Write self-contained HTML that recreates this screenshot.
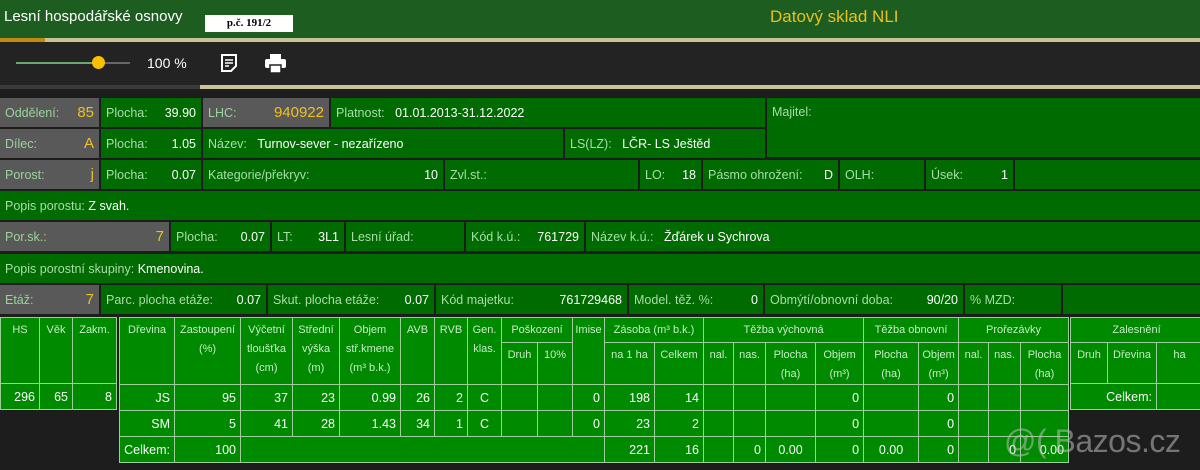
<!DOCTYPE html>
<html><head><meta charset="utf-8"><style>
*{margin:0;padding:0;box-sizing:border-box}
body{width:1200px;height:470px;background:#1d1d1d;font-family:"Liberation Sans",sans-serif;position:relative;overflow:hidden}
.a{position:absolute}
.c{position:absolute;background:#006b00;color:#a9dca9;font-size:12.5px;padding:0 5px;display:flex;align-items:center;white-space:nowrap;overflow:hidden}
.g{background:#595959;color:#9bd39b}
.c b{font-weight:normal;color:#fff}
.c .y{color:#f0c020;font-size:15px}
.r{margin-left:auto}
table{position:absolute;border-collapse:collapse;table-layout:fixed;background:#008a00;color:#fff;font-size:12.5px}
td{border:1px solid #9ccf9c;padding:0 4px;text-align:right;height:26px;vertical-align:middle;white-space:nowrap;overflow:hidden}
td.h{color:#c8eac8;text-align:center;vertical-align:top;padding:3px 1px 0;line-height:19px;font-size:11px;height:25px}
td.s{height:41px}
td.hh{height:66px}
</style></head><body>
<div class="a" style="left:0;top:0;width:1200px;height:38px;background:#1d5e20"></div>
<div class="a" style="left:4px;top:8px;color:#fff;font-size:15px">Lesní hospodářské osnovy</div>
<div class="a" style="left:205px;top:15px;width:88px;height:17px;background:#fff;color:#000;font:bold 11px 'Liberation Serif',serif;text-align:center;line-height:17px">p.č. 191/2</div>
<div class="a" style="left:770px;top:7px;color:#e8c020;font-size:17px">Datový sklad NLI</div>
<div class="a" style="left:0;top:38px;width:1200px;height:4px;background:#c9c39a"></div>
<div class="a" style="left:0;top:38px;width:45px;height:4px;background:#c08a10"></div>
<div class="a" style="left:0;top:42px;width:1200px;height:43px;background:#232323"></div>
<div class="a" style="left:16px;top:62px;width:82px;height:2px;background:#6aa86a"></div>
<div class="a" style="left:98px;top:62px;width:32px;height:2px;background:#666"></div>
<div class="a" style="left:92px;top:56px;width:13px;height:13px;border-radius:50%;background:#f7c000"></div>
<div class="a" style="left:147px;top:55px;color:#fff;font-size:14px">100 %</div>
<svg class="a" style="left:219px;top:53px" width="20" height="20" viewBox="0 0 20 20"><path d="M3 2h14v11l-5 5H3z" fill="none" stroke="#fff" stroke-width="2"/><path d="M6 7h8M6 10h8M6 13h4" stroke="#fff" stroke-width="1.6"/></svg>
<svg class="a" style="left:265px;top:54px" width="21" height="19" viewBox="0 0 21 19"><rect x="5" y="0" width="11" height="5" fill="#fff"/><rect x="0" y="5" width="21" height="9" rx="2" fill="#fff"/><rect x="5" y="11" width="11" height="8" fill="#fff" stroke="#232323" stroke-width="1.5"/></svg>
<div class="a" style="left:0;top:85px;width:1200px;height:4px;background:#c9c39a"></div>
<div class="a" style="left:0;top:85px;width:200px;height:4px;background:#3a3a3a"></div>

<div class="c g" style="left:0;top:98px;width:99px;height:29px">Oddělení:<span class="y r">85</span></div>
<div class="c" style="left:101px;top:98px;width:100px;height:29px">Plocha:<b class="r">39.90</b></div>
<div class="c g" style="left:203px;top:98px;width:126px;height:29px">LHC:<span class="y r">940922</span></div>
<div class="c" style="left:331px;top:98px;width:434px;height:29px">Platnost:&nbsp;&nbsp;&nbsp;<b>01.01.2013-31.12.2022</b></div>
<div class="c" style="left:767px;top:98px;width:433px;height:59px;align-items:flex-start;padding-top:7px">Majitel:</div>
<div class="c g" style="left:0;top:129px;width:99px;height:29px">Dílec:<span class="y r">A</span></div>
<div class="c" style="left:101px;top:129px;width:100px;height:29px">Plocha:<b class="r">1.05</b></div>
<div class="c" style="left:203px;top:129px;width:360px;height:29px">Název:&nbsp;&nbsp;&nbsp;<b>Turnov-sever - nezařízeno</b></div>
<div class="c" style="left:565px;top:129px;width:200px;height:29px">LS(LZ):&nbsp;&nbsp;&nbsp;<b>LČR- LS Ještěd</b></div>
<div class="c g" style="left:0;top:160px;width:99px;height:29px">Porost:<span class="y r">j</span></div>
<div class="c" style="left:101px;top:160px;width:100px;height:29px">Plocha:<b class="r">0.07</b></div>
<div class="c" style="left:203px;top:160px;width:240px;height:29px">Kategorie/překryv:<b class="r">10</b></div>
<div class="c" style="left:445px;top:160px;width:193px;height:29px">Zvl.st.:</div>
<div class="c" style="left:640px;top:160px;width:61px;height:29px">LO:<b class="r">18</b></div>
<div class="c" style="left:703px;top:160px;width:135px;height:29px">Pásmo ohrožení:<b class="r">D</b></div>
<div class="c" style="left:840px;top:160px;width:84px;height:29px">OLH:</div>
<div class="c" style="left:926px;top:160px;width:87px;height:29px">Úsek:<b class="r">1</b></div>
<div class="c" style="left:1015px;top:160px;width:185px;height:29px"></div>
<div class="c" style="left:0;top:191px;width:1200px;height:29px">Popis porostu:&nbsp;<b>Z svah.</b></div>
<div class="c g" style="left:0;top:222px;width:169px;height:29px">Por.sk.:<span class="y r">7</span></div>
<div class="c" style="left:171px;top:222px;width:99px;height:29px">Plocha:<b class="r">0.07</b></div>
<div class="c" style="left:272px;top:222px;width:72px;height:29px">LT:<b class="r">3L1</b></div>
<div class="c" style="left:346px;top:222px;width:118px;height:29px">Lesní úřad:</div>
<div class="c" style="left:466px;top:222px;width:118px;height:29px">Kód k.ú.:<b class="r">761729</b></div>
<div class="c" style="left:586px;top:222px;width:614px;height:29px">Název k.ú.:&nbsp;&nbsp;&nbsp;<b>Žďárek u Sychrova</b></div>
<div class="c" style="left:0;top:254px;width:1200px;height:29px">Popis porostní skupiny:&nbsp;<b>Kmenovina.</b></div>
<div class="c g" style="left:0;top:285px;width:99px;height:29px">Etáž:<span class="y r">7</span></div>
<div class="c" style="left:101px;top:285px;width:165px;height:29px">Parc. plocha etáže:<b class="r">0.07</b></div>
<div class="c" style="left:268px;top:285px;width:166px;height:29px">Skut. plocha etáže:<b class="r">0.07</b></div>
<div class="c" style="left:436px;top:285px;width:191px;height:29px">Kód majetku:<b class="r">761729468</b></div>
<div class="c" style="left:629px;top:285px;width:134px;height:29px">Model. těž. %:<b class="r">0</b></div>
<div class="c" style="left:765px;top:285px;width:198px;height:29px">Obmýtí/obnovní doba:<b class="r">90/20</b></div>
<div class="c" style="left:965px;top:285px;width:96px;height:29px">% MZD:</div>
<div class="c" style="left:1063px;top:285px;width:137px;height:29px"></div>

<table style="left:0;top:317px;width:116px">
<colgroup><col style="width:39px"><col style="width:33px"><col style="width:44px"></colgroup>
<tr><td class="h hh">HS</td><td class="h hh">Věk</td><td class="h hh">Zakm.</td></tr>
<tr><td>296</td><td>65</td><td>8</td></tr>
</table>

<table style="left:119px;top:317px;width:949px">
<colgroup><col style="width:55px"><col style="width:66px"><col style="width:52px"><col style="width:47px"><col style="width:61px"><col style="width:34px"><col style="width:33px"><col style="width:34px"><col style="width:36px"><col style="width:35px"><col style="width:32px"><col style="width:50px"><col style="width:49px"><col style="width:30px"><col style="width:32px"><col style="width:50px"><col style="width:48px"><col style="width:55px"><col style="width:40px"><col style="width:30px"><col style="width:32px"><col style="width:48px"></colgroup>
<tr><td class="h" rowspan="2">Dřevina</td><td class="h" rowspan="2">Zastoupení<br>(%)</td><td class="h" rowspan="2">Výčetní<br>tloušťka<br>(cm)</td><td class="h" rowspan="2">Střední<br>výška<br>(m)</td><td class="h" rowspan="2">Objem<br>stř.kmene<br>(m³ b.k.)</td><td class="h" rowspan="2">AVB</td><td class="h" rowspan="2">RVB</td><td class="h" rowspan="2">Gen.<br>klas.</td><td class="h" colspan="2">Poškození</td><td class="h" rowspan="2">Imise</td><td class="h" colspan="2">Zásoba (m³ b.k.)</td><td class="h" colspan="4">Těžba výchovná</td><td class="h" colspan="2">Těžba obnovní</td><td class="h" colspan="3">Prořezávky</td></tr>
<tr><td class="h s">Druh</td><td class="h s">10%</td><td class="h s">na 1 ha</td><td class="h s">Celkem</td><td class="h s">nal.</td><td class="h s">nas.</td><td class="h s">Plocha<br>(ha)</td><td class="h s">Objem<br>(m³)</td><td class="h s">Plocha<br>(ha)</td><td class="h s">Objem<br>(m³)</td><td class="h s">nal.</td><td class="h s">nas.</td><td class="h s">Plocha<br>(ha)</td></tr>
<tr><td>JS</td><td>95</td><td>37</td><td>23</td><td>0.99</td><td>26</td><td>2</td><td style="text-align:center">C</td><td></td><td></td><td>0</td><td>198</td><td>14</td><td></td><td></td><td></td><td>0</td><td></td><td>0</td><td></td><td></td><td></td></tr>
<tr><td>SM</td><td>5</td><td>41</td><td>28</td><td>1.43</td><td>34</td><td>1</td><td style="text-align:center">C</td><td></td><td></td><td>0</td><td>23</td><td>2</td><td></td><td></td><td></td><td>0</td><td></td><td>0</td><td></td><td></td><td></td></tr>
<tr><td>Celkem:</td><td>100</td><td colspan="9"></td><td>221</td><td>16</td><td></td><td>0</td><td style="text-align:center">0.00</td><td>0</td><td style="text-align:center">0.00</td><td>0</td><td></td><td>0</td><td>0.00</td></tr>
</table>

<table style="left:1070px;top:317px;width:132px">
<colgroup><col style="width:37px"><col style="width:49px"><col style="width:46px"></colgroup>
<tr><td class="h" colspan="3">Zalesnění</td></tr>
<tr><td class="h s">Druh</td><td class="h s">Dřevina</td><td class="h s">ha</td></tr>
<tr><td colspan="2">Celkem:</td><td></td></tr>
</table>

<div class="a" style="left:1004px;top:423px;font-size:32px;letter-spacing:-0.5px;white-space:nowrap;color:rgba(190,190,190,0.55)">@( Bazos.cz</div>
</body></html>
